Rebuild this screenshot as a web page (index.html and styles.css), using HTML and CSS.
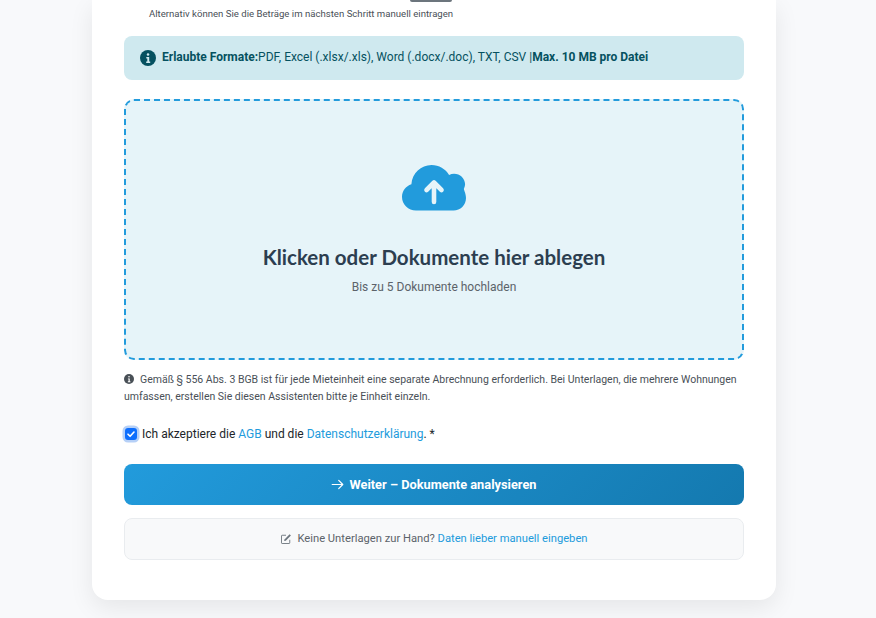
FILE: index.html
```html
<!DOCTYPE html>
<html lang="de">
<head>
<meta charset="utf-8">
<title>Dokumente hochladen</title>
<link rel="stylesheet" href="styles.css">
</head>
<body>
<main class="card">
  <div class="hint-top">
    <div class="clipped"><span class="pill"></span></div>
    <p class="alt">Alternativ können Sie die Beträge im nächsten Schritt manuell eintragen</p>
  </div>
  <div class="alert">
    <svg class="alert-icon" viewBox="0 0 16 16"><circle cx="8" cy="8" r="8" fill="#055160"/><circle cx="8" cy="4.400" r="1.250" fill="#cfe9ef"/><path d="M6.300 7h2.900v4.600h1V13H6.200v-1.400h1.100V8.400h-1z" fill="#cfe9ef"/></svg>
    <span class="alert-text"><strong>Erlaubte Formate:</strong>PDF, Excel (.xlsx/.xls), Word (.docx/.doc), TXT, CSV |<strong>Max. 10 MB pro Datei</strong></span>
  </div>
  <div class="drop">
    <svg class="cloud" viewBox="0 0 64 46"><path d="M14 45.500C6.300 45.500 0 39.500 0 32c0-6 3.800-11 9.400-12.800C10.200 8.300 19 0 29.500 0c7.500 0 14 3.900 17.600 10 1.500-.8 3.200-1.200 5-1.200 6 0 10.900 4.700 11 10.500-.1 1.500-.4 2.800-1 4 .1 0 .1 0 0 0C61 24 64 28 64 33c0 7-5.600 12.500-12.500 12.500z" fill="#229bdc"/><path d="M32 37V18M24.500 25l7.500-7.500 7.500 7.500" fill="none" stroke="#e6f4f9" stroke-width="4.600" stroke-linecap="round" stroke-linejoin="round"/></svg>
    <h2>Klicken oder Dokumente hier ablegen</h2>
    <p>Bis zu 5 Dokumente hochladen</p>
  </div>
  <p class="note"><svg class="note-icon" viewBox="0 0 16 16"><circle cx="8" cy="8" r="8" fill="#495057"/><circle cx="8" cy="4.400" r="1.300" fill="#fff"/><path d="M6.300 7h2.900v4.600h1V13H6.200v-1.400h1.100V8.400h-1z" fill="#fff"/></svg>Gemäß § 556 Abs. 3 BGB ist für jede Mieteinheit eine separate Abrechnung erforderlich. Bei Unterlagen, die mehrere Wohnungen umfassen, erstellen Sie diesen Assistenten bitte je Einheit einzeln.</p>
  <label class="consent">
    <span class="check"><svg viewBox="0 0 12 12"><path d="M3 6.200l2.100 2.100 3.900-4.300" fill="none" stroke="#fff" stroke-width="1.600" stroke-linecap="round" stroke-linejoin="round"/></svg></span>
    <span>Ich akzeptiere die <a href="#">AGB</a> und die <a href="#">Datenschutzerklärung</a>. *</span>
  </label>
  <button class="next" type="button">
    <svg viewBox="0 0 16 16"><path d="M1.500 8h13M9.500 3 14.500 8 9.500 13" fill="none" stroke="#fff" stroke-width="1.500" stroke-linecap="round" stroke-linejoin="round"/></svg>
    Weiter – Dokumente analysieren
  </button>
  <div class="manual">
    <svg viewBox="0 0 16 16"><path d="M13 9v4.200a.8.8 0 0 1-.8.8H2.800a.8.800 0 0 1-.8-.8V3.800a.8.800 0 0 1 .8-.8H8" fill="none" stroke="#6c757d" stroke-width="1.200"/><path d="M6 8.500 12.800 1.700l1.700 1.700L7.700 10.200 5.500 10.700z" fill="#6c757d"/></svg>
    <span class="manual-text">Keine Unterlagen zur Hand? <a href="#">Daten lieber manuell eingeben</a></span>
  </div>
</main>
</body>
</html>
```
FILE: styles.css
```css
* { box-sizing: border-box; }
html, body { margin: 0; height: 618px; overflow: hidden; }
body { background: #f8f9fb; font-family: Roboto, sans-serif; color: #212529; padding: 0 100px 0 92px; }
.card { width: 684px; height: 600px; background: #fff; border-radius: 0 0 16px 16px; box-shadow: 0 8px 24px rgba(0,0,0,.08); padding: 0 32px; overflow: hidden; }
.hint-top { height: 36px; padding-left: 25px; }
.clipped { height: 2px; display: flex; justify-content: flex-end; width: 303px; }
.pill { display: block; width: 42px; height: 2px; background: #6c757d; border-radius: 0 0 3px 3px; }
.alt { margin: 5px 0 0; font-size: 9.600px; line-height: 14px; color: #495057; }
.alert { height: 44px; background: #cfe9ef; border-radius: 8px; display: flex; align-items: center; gap: 6px; padding: 0 16px; font-size: 12px; color: #055160; }
.alert-icon { width: 16px; height: 16px; flex: none; }
.alert-text { margin-top: -2px; }
.alert strong { font-weight: 700; }
.drop { margin-top: 19px; height: 261px; background: #e6f4f9; border: 2px dashed #229bdc; border-radius: 10px; display: flex; flex-direction: column; align-items: center; padding-top: 64px; }
.cloud { width: 64px; height: 46px; display: block; }
.drop h2 { margin: 33px 0 0; font-family: Lato, sans-serif; font-size: 20.500px; line-height: 26px; font-weight: 700; color: #2c3e50; }
.drop p { margin: 10px 0 0; font-size: 12px; line-height: 14px; color: #5c636a; }
.note { margin: 11px 0 0; font-size: 10.500px; line-height: 17px; color: #495057; }
.note-icon { width: 10px; height: 10px; margin-right: 6px; vertical-align: -1px; }
.consent { display: flex; align-items: center; gap: 5px; margin-top: 21px; font-size: 12px; line-height: 16px; color: #212529; }
.consent a, .manual a { color: #229bdc; text-decoration: none; }
.check { width: 12px; height: 12px; border-radius: 3px; background: #0d6efd; box-shadow: 0 0 0 2.500px #b6d0f7; display: flex; margin-left: 1px; }
.check svg { width: 12px; height: 12px; }
.next { display: flex; align-items: center; justify-content: center; gap: 5px; width: 100%; height: 41px; margin-top: 22px; border: 0; border-radius: 8px; background: linear-gradient(135deg, #229bdc, #1479af); color: #fff; font: 700 12.800px Roboto, sans-serif; }
.next svg { width: 13px; height: 13px; }
.manual { display: flex; align-items: center; justify-content: center; gap: 5px; height: 42px; margin-top: 13px; background: #f8f9fa; border: 1px solid #e9ecef; border-radius: 8px; font-size: 11.200px; color: #5c636a; }
.manual-text { margin-top: -2px; }
.manual svg { width: 12px; height: 12px; }
```
